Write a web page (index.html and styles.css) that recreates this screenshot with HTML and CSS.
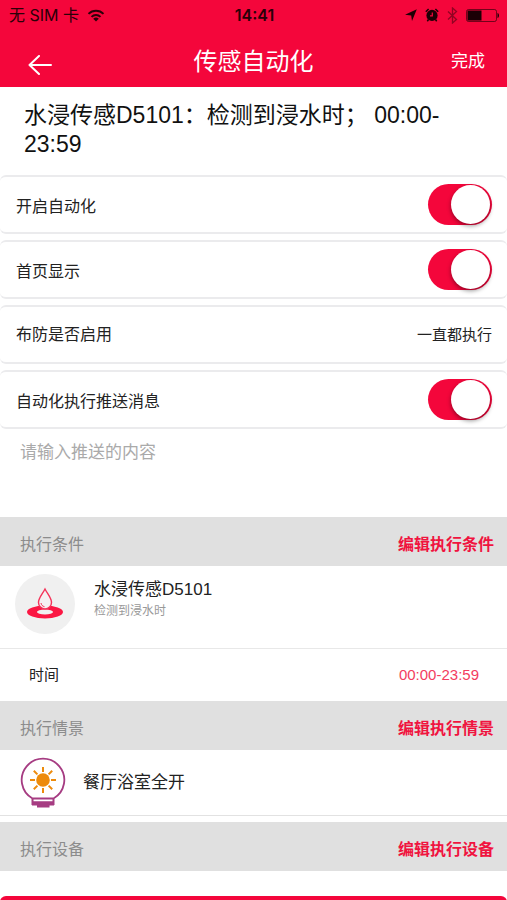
FILE: index.html
```html
<!DOCTYPE html>
<html lang="zh-CN">
<head>
<meta charset="utf-8">
<meta name="viewport" content="width=device-width, initial-scale=1">
<title>传感自动化</title>
<link rel="stylesheet" href="styles.css">
</head>
<body>
<div class="screen">
  <header class="top">
    <div class="status">
      <div class="status-left">
        <span>无 SIM 卡</span>
        <svg width="18" height="13" viewBox="0 0 18 13" fill="none" stroke="currentColor" stroke-width="2">
          <path d="M1.5 4.9a10.6 10.6 0 0 1 15 0M4.5 7.9a6.4 6.4 0 0 1 9 0"/>
          <path d="M9 12.6L6.2 9.8a4 4 0 0 1 5.6 0z" fill="currentColor" stroke="none"/>
        </svg>
      </div>
      <time class="clock">14:41</time>
      <div class="status-right">
        <svg width="12" height="12" viewBox="0 0 12 12" fill="currentColor"><path d="M11.8.2L7 12 6.200 6.500 0 5.800z"/></svg>
        <svg width="14" height="14" viewBox="0 0 14 14" fill="none" stroke="currentColor">
          <circle cx="7" cy="7.4" r="5.6" fill="currentColor" stroke="none"/>
          <path d="M7.300 4.500v3.300H5" stroke="#f4063b" stroke-width="1.200"/>
          <path d="M.8 3.800L3.600 1M13.200 3.800L10.400 1" stroke-width="1.500"/>
          <path d="M3.500 11.5L2.300 13.200M10.500 11.500l1.200 1.700" stroke-width="1.500"/>
        </svg>
        <svg class="faint" width="11" height="17" viewBox="0 0 11 17" fill="none" stroke="currentColor" stroke-width="1.3"><path d="M1 4.500l8.500 8-4 3.500V1l4 3.500-8.500 8"/></svg>
        <svg width="34" height="13" viewBox="0 0 34 13">
          <rect x=".5" y=".5" width="30" height="12" rx="2" fill="none" stroke="currentColor" stroke-opacity=".6"/>
          <rect x="1.500" y="1.500" width="14" height="10" fill="currentColor"/>
          <path d="M31.500 4c2 .5 2 4.500 0 5z" fill="currentColor"/>
        </svg>
      </div>
    </div>
    <nav class="nav">
      <button class="back" type="button" aria-label="返回">
        <svg width="24" height="20" viewBox="0 0 24 20" fill="none" stroke="currentColor" stroke-width="2" stroke-linecap="round" stroke-linejoin="round"><path d="M23 10H1.500M11 1L1.500 10l9.500 9"/></svg>
      </button>
      <h1>传感自动化</h1>
      <button class="done" type="button">完成</button>
    </nav>
  </header>

  <main>
    <p class="summary">水浸传感D5101：检测到浸水时； 00:00-<wbr>23:59</p>

    <div class="cards">
      <div class="card"><label for="enable">开启自动化</label><input class="switch" id="enable" type="checkbox" role="switch" checked></div>
      <div class="card"><label for="home">首页显示</label><input class="switch" id="home" type="checkbox" role="switch" checked></div>
      <div class="card"><span>布防是否启用</span><button class="choice" type="button">一直都执行</button></div>
      <div class="card"><label for="push">自动化执行推送消息</label><input class="switch" id="push" type="checkbox" role="switch" checked></div>
    </div>
    <textarea class="message" aria-label="推送的内容" placeholder="请输入推送的内容"></textarea>

    <section>
      <div class="section-head"><h2>执行条件</h2><a href="#conditions">编辑执行条件</a></div>
      <div class="sensor" id="conditions">
        <svg class="sensor-icon" width="60" height="60" viewBox="0 0 60 60">
          <circle cx="30" cy="30" r="30" fill="#f0f0f0"/>
          <path fill="#fb1743" fill-rule="evenodd" d="M12 38a18 6.500 0 1 0 36 0a18 6.500 0 1 0-36 0zM22 38a8 2.500 0 1 0 16 0a8 2.500 0 1 0-16 0z"/>
          <path d="M30 15c-2.500 5-6.500 9-6.500 13.500a6.500 6.500 0 0 0 13 0c0-4.500-4-8.500-6.500-13.500z" fill="#f5f1f2" stroke="#f43359" stroke-width="1.400"/>
          <path d="M26 29c.3 2 1.500 3.200 3.500 3.700" fill="none" stroke="#f43359"/>
        </svg>
        <div>
          <h3>水浸传感D5101</h3>
          <p>检测到浸水时</p>
        </div>
      </div>
      <div class="time-row"><span>时间</span><time>00:00-23:59</time></div>
    </section>

    <section>
      <div class="section-head"><h2>执行情景</h2><a href="#scenes">编辑执行情景</a></div>
      <div class="scene" id="scenes">
        <svg width="46" height="52" viewBox="0 0 46 52" fill="none">
          <path d="M12.500 41.500a21.300 21.300 0 1 1 21 0z" stroke="#a63c82" stroke-width="1.800"/>
          <path d="M12.500 41.500v5.500h21v-5.500M12.500 45.300h21" stroke="#a63c82" stroke-width="2"/>
          <path d="M12 46h22v2.500h-4.500v2H17v-2h-5z" fill="#a63c82"/>
          <circle cx="23" cy="23" r="6.800" fill="#ed8b0c"/>
          <path d="M23 10v5M23 31v5M10 23h5M31 23h5M13.800 13.800l3.600 3.600M28.600 28.600l3.600 3.600M32.200 13.800l-3.600 3.600M17.400 28.600l-3.600 3.600" stroke="#ed8b0c" stroke-width="2"/>
        </svg>
        <h3>餐厅浴室全开</h3>
      </div>
    </section>

    <section>
      <div class="section-head"><h2>执行设备</h2><a href="#devices">编辑执行设备</a></div>
      <div id="devices"></div>
    </section>
  </main>
  <footer><div class="action"></div></footer>
</div>
</body>
</html>
```
FILE: styles.css
```css
* { box-sizing: border-box; }

body,
h1, h2, h3, p { margin: 0; font-weight: 400; }

body {
  background: #fff;
  color: #222;
  font-family: "Liberation Sans", "Noto Sans CJK SC", sans-serif;
  font-size: 16px;
  line-height: 24px;
}

button {
  border: 0;
  padding: 0;
  background: none;
  color: inherit;
  font: inherit;
}

svg { display: block; flex: none; }

.screen {
  display: flex;
  flex-direction: column;
  height: 100vh;
  overflow: hidden;
}

main { flex: none; }

/* Header */
.top { flex: none; background: #f4063b; }

.status {
  display: grid;
  grid-template-columns: 1fr auto 1fr;
  align-items: center;
  height: 30px;
  padding: 0 7px 0 9px;
  color: #2a0008;
  font-family: Inter, "Noto Sans CJK SC", sans-serif;
  font-size: 16px;
}

.status-left,
.status-right { display: flex; align-items: center; gap: 8px; }
.status-right { justify-content: flex-end; color: #1c0005; }
.clock { font-weight: 600; }
.faint { opacity: .45; }

.nav {
  display: grid;
  grid-template-columns: 1fr auto 1fr;
  align-items: center;
  height: 57px;
  padding: 6px 22px 0;
  color: #fff;
}

.nav h1 { font-size: 24px; line-height: 32px; }
.back { justify-self: start; padding: 6px 0 0 6px; }
.done { justify-self: end; font-size: 17px; }

.summary {
  padding: 14px 24px 11px;
  color: #111;
  font-size: 23px;
  line-height: 29px;
}

/* Settings */
.cards { display: grid; gap: 6px; padding-top: 5px; }

.card {
  display: flex;
  align-items: center;
  justify-content: space-between;
  height: 59px;
  padding: 0 15px 0 16px;
  border: solid #ebebed;
  border-width: 2px 0;
  border-radius: 6px;
}

.card label { padding-top: 4px; }

.choice { font-size: 15px; }

.switch {
  appearance: none;
  display: flex;
  width: 64px;
  height: 41px;
  margin: 0;
  padding: 1px 2px 1px 1px;
  border-radius: 21px;
  background: #f4063b;
}

.switch::before {
  content: "";
  width: 39px;
  height: 39px;
  border-radius: 50%;
  background: #fff;
  box-shadow: 0 2px 4px rgba(0, 0, 0, .4);
}

.switch:checked { justify-content: flex-end; }

.message {
  display: block;
  width: 100%;
  height: 88px;
  padding: 12px 20px;
  border: 0;
  resize: none;
  font: inherit;
  font-size: 17px;
}

.message::placeholder { color: #aaa; }

/* Sections */
.section-head {
  display: flex;
  align-items: center;
  justify-content: space-between;
  height: 49px;
  padding: 7px 13px 0 20px;
  background: #e0e0e0;
}

.section-head h2 { color: #8c8c8c; font-size: 16px; line-height: 24px; }
.section-head a { color: #f0143f; font-weight: 700; text-decoration: none; }

h3 { color: #222; font-size: 17px; line-height: 24px; }

.sensor {
  display: flex;
  gap: 19px;
  height: 83px;
  padding: 8px 15px;
  border-bottom: 1px solid #e8e8e8;
}

.sensor > div { padding-top: 4px; }
.sensor p { color: #999; font-size: 12px; line-height: 18px; }

.time-row {
  display: flex;
  align-items: center;
  justify-content: space-between;
  height: 52px;
  padding: 0 28px 0 29px;
  font-size: 15px;
}

.time-row time { color: #f33d60; }

.scene {
  display: flex;
  align-items: center;
  gap: 17px;
  height: 66px;
  margin-bottom: 6px;
  padding: 0 20px;
  border-bottom: 1px solid #e2e2e2;
}

footer { flex: none; padding-top: 25px; }

.action {
  height: 50px;
  border-radius: 6px;
  background: #f4063b;
}
```
